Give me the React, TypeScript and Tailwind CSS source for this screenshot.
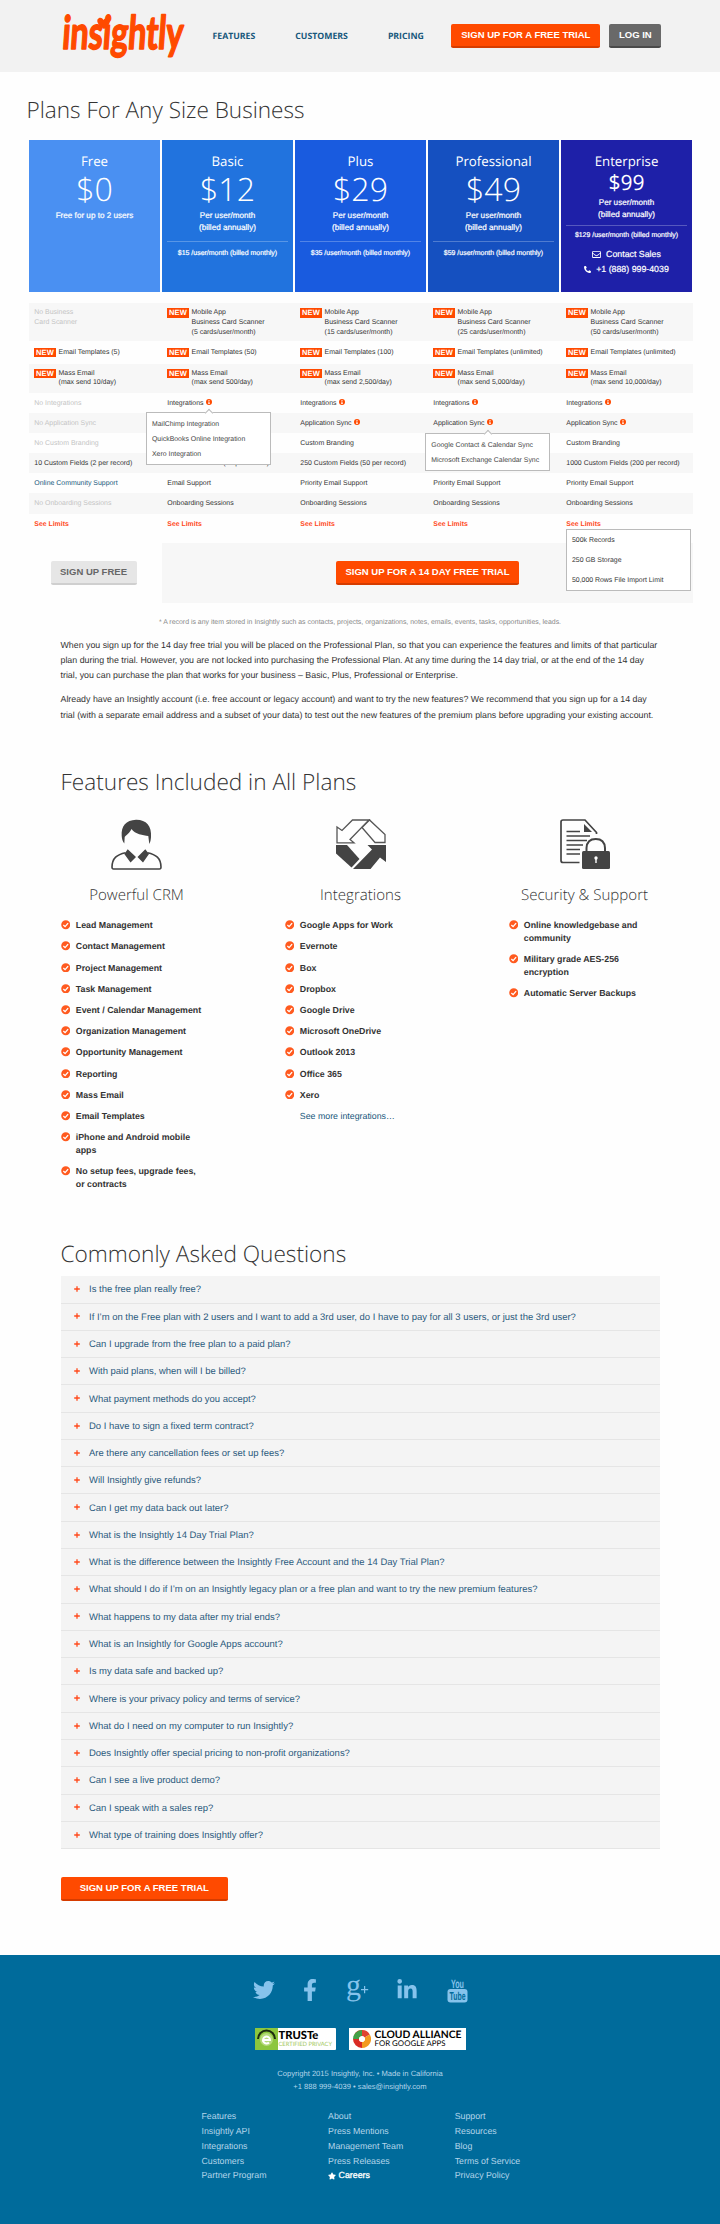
import type { ReactNode } from "react";
import { FaFacebookF, FaLinkedinIn, FaPhoneAlt, FaRegEnvelope, FaStar, FaTwitter } from "react-icons/fa";

type Plan = {
  name: string;
  price: string;
  monthly?: string;
  bg: string;
};

const plans: Plan[] = [
  { name: "Free", price: "$0", bg: "bg-[#4a90f2]" },
  { name: "Basic", price: "$12", monthly: "$15", bg: "bg-[#2173de]" },
  { name: "Plus", price: "$29", monthly: "$35", bg: "bg-[#195bdf]" },
  { name: "Professional", price: "$49", monthly: "$59", bg: "bg-[#1550c0]" },
  { name: "Enterprise", price: "$99", monthly: "$129", bg: "bg-[#1e20a8]" },
];

type Cell = { text: string[]; isNew?: boolean; muted?: boolean; link?: boolean; info?: boolean };

const off = (...text: string[]): Cell => ({ text, muted: true });
const fresh = (...text: string[]): Cell => ({ text, isNew: true });
const on = (...text: string[]): Cell => ({ text });
const info = (...text: string[]): Cell => ({ text, info: true });
const blank: Cell = { text: [] };

const rows: { height: string; cells: Cell[] }[] = [
  {
    height: "h-[38px] pt-[5px]",
    cells: [
      off("No Business", "Card Scanner"),
      fresh("Mobile App", "Business Card Scanner", "(5 cards/user/month)"),
      fresh("Mobile App", "Business Card Scanner", "(15 cards/user/month)"),
      fresh("Mobile App", "Business Card Scanner", "(25 cards/user/month)"),
      fresh("Mobile App", "Business Card Scanner", "(50 cards/user/month)"),
    ],
  },
  {
    height: "h-[22.5px] pt-[6.5px]",
    cells: [
      fresh("Email Templates (5)"),
      fresh("Email Templates (50)"),
      fresh("Email Templates (100)"),
      fresh("Email Templates (unlimited)"),
      fresh("Email Templates (unlimited)"),
    ],
  },
  {
    height: "h-[29px] pt-[5px]",
    cells: [
      fresh("Mass Email", "(max send 10/day)"),
      fresh("Mass Email", "(max send 500/day)"),
      fresh("Mass Email", "(max send 2,500/day)"),
      fresh("Mass Email", "(max send 5,000/day)"),
      fresh("Mass Email", "(max send 10,000/day)"),
    ],
  },
  {
    height: "h-[20.2px] pt-[6px]",
    cells: [off("No Integrations"), info("Integrations"), info("Integrations"), info("Integrations"), info("Integrations")],
  },
  {
    height: "h-[20.2px] pt-[6px]",
    cells: [off("No Application Sync"), blank, info("Application Sync"), info("Application Sync"), info("Application Sync")],
  },
  {
    height: "h-[20.2px] pt-[6px]",
    cells: [off("No Custom Branding"), blank, on("Custom Branding"), blank, on("Custom Branding")],
  },
  {
    height: "h-[20.2px] pt-[6px]",
    cells: [
      on("10 Custom Fields (2 per record)"),
      on("50 Custom Fields (10 per record)"),
      on("250 Custom Fields (50 per record)"),
      blank,
      on("1000 Custom Fields (200 per record)"),
    ],
  },
  {
    height: "h-[20.2px] pt-[6px]",
    cells: [
      { text: ["Online Community Support"], link: true },
      on("Email Support"),
      on("Priority Email Support"),
      on("Priority Email Support"),
      on("Priority Email Support"),
    ],
  },
  {
    height: "h-[20.2px] pt-[6px]",
    cells: [
      off("No Onboarding Sessions"),
      on("Onboarding Sessions"),
      on("Onboarding Sessions"),
      on("Onboarding Sessions"),
      on("Onboarding Sessions"),
    ],
  },
];

const crm = [
  ["Lead Management"],
  ["Contact Management"],
  ["Project Management"],
  ["Task Management"],
  ["Event / Calendar Management"],
  ["Organization Management"],
  ["Opportunity Management"],
  ["Reporting"],
  ["Mass Email"],
  ["Email Templates"],
  ["iPhone and Android mobile", "apps"],
  ["No setup fees, upgrade fees,", "or contracts"],
];

const integrations = [
  ["Google Apps for Work"],
  ["Evernote"],
  ["Box"],
  ["Dropbox"],
  ["Google Drive"],
  ["Microsoft OneDrive"],
  ["Outlook 2013"],
  ["Office 365"],
  ["Xero"],
];

const security = [["Online knowledgebase and", "community"], ["Military grade AES-256", "encryption"], ["Automatic Server Backups"]];

const questions = [
  "Is the free plan really free?",
  "If I’m on the Free plan with 2 users and I want to add a 3rd user, do I have to pay for all 3 users, or just the 3rd user?",
  "Can I upgrade from the free plan to a paid plan?",
  "With paid plans, when will I be billed?",
  "What payment methods do you accept?",
  "Do I have to sign a fixed term contract?",
  "Are there any cancellation fees or set up fees?",
  "Will Insightly give refunds?",
  "Can I get my data back out later?",
  "What is the Insightly 14 Day Trial Plan?",
  "What is the difference between the Insightly Free Account and the 14 Day Trial Plan?",
  "What should I do if I’m on an Insightly legacy plan or a free plan and want to try the new premium features?",
  "What happens to my data after my trial ends?",
  "What is an Insightly for Google Apps account?",
  "Is my data safe and backed up?",
  "Where is your privacy policy and terms of service?",
  "What do I need on my computer to run Insightly?",
  "Does Insightly offer special pricing to non-profit organizations?",
  "Can I see a live product demo?",
  "Can I speak with a sales rep?",
  "What type of training does Insightly offer?",
];

const footerLinks = [
  ["Features", "Insightly API", "Integrations", "Customers", "Partner Program"],
  ["About", "Press Mentions", "Management Team", "Press Releases", "Careers"],
  ["Support", "Resources", "Blog", "Terms of Service", "Privacy Policy"],
];

function Logo() {
  return (
    <svg width="128" height="56" viewBox="0 0 128 56" fill="#ff4a00" className="shrink-0 overflow-visible">
      <g transform="translate(3 3.500) skewX(-4) scale(1 1.1)">
        <text
          x="1"
          y="34"
          textLength="121"
          lengthAdjust="spacingAndGlyphs"
          stroke="#ff4a00"
          strokeWidth="1.500"
          strokeLinejoin="round"
          className="font-['Lato',sans-serif] text-[42px] font-bold"
        >
          insightly
        </text>
      </g>
      <path d="M44 21 c-5.500 -3.600 -7.600 -7 -6.400 -9.700 c1.400 -2.500 4.800 -2 5.700 .7 c1.600 -2.500 5.200 -2.500 6.200 .2 c1 2.900 -1.400 6.200 -5.500 8.800z" />
    </svg>
  );
}

function Button({ children, className }: { children: ReactNode; className: string }) {
  return (
    <button
      className={`flex h-[23.5px] items-center justify-center rounded-[2px] border-b-2 text-[9.52px] leading-none font-bold whitespace-nowrap ${className}`}
    >
      {children}
    </button>
  );
}

const orange = "border-[#d63c00] bg-[#ff4a00] text-white";

function Header() {
  return (
    <header className="flex h-[71.5px] items-start bg-[#f2f2f2] pl-[60px]">
      <div className="mt-2 h-14 w-[128px]">
        <Logo />
      </div>
      <nav className="mt-[28.5px] ml-[24.5px] flex h-4 items-center gap-[40px] font-['Open_Sans',sans-serif] text-[8.73px] font-bold text-[#17587c]">
        <a>FEATURES</a>
        <a>CUSTOMERS</a>
        <a>PRICING</a>
      </nav>
      <div className="mt-6 ml-[27.500px] flex gap-[9px]">
        <Button className={`w-[149px] ${orange}`}>SIGN UP FOR A FREE TRIAL</Button>
        <Button className="w-[52px] border-[#4a4a4a] bg-[#696969] text-white">LOG IN</Button>
      </div>
    </header>
  );
}

function PlanCard({ plan }: { plan: Plan }) {
  const enterprise = plan.name === "Enterprise";
  return (
    <div className={`flex h-[152px] w-[131px] flex-col items-center text-white ${plan.bg}`}>
      <h3 className="mt-3 h-[18px] font-['Open_Sans',sans-serif] text-[13.25px] leading-[18px]">{plan.name}</h3>
      {enterprise ? (
        <p className="h-[26px] font-['Open_Sans',sans-serif] text-[21px] leading-[27px]">{plan.price}</p>
      ) : (
        <p className="h-[38px] font-['Open_Sans',sans-serif] text-[32.1px] leading-[39px] font-light">{plan.price}</p>
      )}
      <div
        className={`text-center text-[8.15px] [-webkit-text-stroke:0.2px_white] ${enterprise ? "mt-[1px] leading-[11.8px]" : "mt-[2px] leading-[12.3px]"}`}
      >
        {plan.monthly ? (
          <>
            Per user/month
            <br />
            (billed annually)
          </>
        ) : (
          "Free for up to 2 users"
        )}
      </div>
      {plan.monthly && (
        <div
          className={`w-[121px] border-t border-white/25 text-center text-[6.96px] whitespace-nowrap [-webkit-text-stroke:0.2px_white] ${enterprise ? "mt-[4.500px] pt-[4px] leading-[12px]" : "mt-[6px] pt-[6.500px] leading-[12px]"}`}
        >
          {plan.monthly} /user/month (billed monthly)
        </div>
      )}
      {enterprise && (
        <div className="mt-[5px] flex flex-col items-center text-[8.8px] leading-[15px] [-webkit-text-stroke:0.2px_white]">
          <span className="flex items-center gap-[5px]">
            <FaRegEnvelope className="size-[9px]" />
            Contact Sales
          </span>
          <span className="flex items-center gap-[5px]">
            <FaPhoneAlt className="size-[7px]" />
            +1 (888) 999-4039
          </span>
        </div>
      )}
    </div>
  );
}

function InfoDot() {
  return (
    <svg width="6" height="6" viewBox="0 0 12 12" className="ml-[2px] inline-block align-[-0.5px]">
      <circle cx="6" cy="6" r="6" fill="#ff4a00" />
      <path d="M5 2h2v2H5zM4.500 5H7v3.500h.7V10H4.300V8.500H5V6.300h-.5z" fill="#fff" />
    </svg>
  );
}

function TableCell({ cell }: { cell: Cell }) {
  const colour = cell.muted ? "text-[#c4c4c4]" : cell.link ? "text-[#17587c]" : "text-[#333]";
  return (
    <div className={`flex w-[133px] shrink-0 pl-[5.300px] text-[6.95px] leading-[9.8px] whitespace-nowrap ${colour}`}>
      {cell.isNew && (
        <span className="mr-[3px] flex h-[9.5px] w-[21.3px] items-center justify-center bg-[#ff4a00] text-[7.5px] leading-none font-bold tracking-[0.2px] text-white">
          NEW
        </span>
      )}
      <span>
        {cell.text.map((line) => (
          <span key={line} className="block">
            {line}
            {cell.info && <InfoDot />}
          </span>
        ))}
      </span>
    </div>
  );
}

function Tooltip({ lines, place, caret }: { lines: string[]; place: string; caret: string }) {
  return (
    <div className={`absolute z-10 w-[124.5px] border border-[#bbb] bg-white pl-[5px] text-[6.92px] leading-[15px] text-[#444] ${place}`}>
      <span className={`absolute -top-[3.500px] size-[6px] rotate-45 border-t border-l border-[#bbb] bg-white ${caret}`} />
      {lines.map((l) => (
        <p key={l}>{l}</p>
      ))}
    </div>
  );
}

function PricingTable() {
  return (
    <section className="relative pl-[29px]">
      <div className="flex gap-[2px]">
        {plans.map((p) => (
          <PlanCard key={p.name} plan={p} />
        ))}
      </div>
      <div className="mt-[11px] w-[664px]">
        {rows.map((row, i) => (
          <div key={i} className={`flex items-start ${row.height} ${i % 2 === 0 ? "bg-[#f7f7f7]" : ""}`}>
            {row.cells.map((cell, j) => (
              <TableCell key={j} cell={cell} />
            ))}
          </div>
        ))}
        <div className="flex h-[29.3px] pt-[1px] text-[6.9px] leading-[20px] font-bold text-[#ff4a1c]">
          {plans.map((p) => (
            <span key={p.name} className="w-[133px] shrink-0 pl-[5.300px]">
              See Limits
            </span>
          ))}
        </div>
        <div className="flex h-[60px] items-center">
          <div className="w-[133px] pl-[21.500px]">
            <Button className="w-[86px] border-[#cfcfcf] bg-[#e6e6e6] text-[#666]">SIGN UP FREE</Button>
          </div>
          <div className="flex h-full flex-1 items-center justify-center bg-[#f7f7f7]">
            <Button className={`w-[183px] ${orange}`}>SIGN UP FOR A 14 DAY FREE TRIAL</Button>
          </div>
        </div>
      </div>
      <Tooltip
        lines={["MailChimp Integration", "QuickBooks Online Integration", "Xero Integration"]}
        place="top-[272px] left-[146px] h-[52.500px] pt-[3.500px]"
        caret="left-[59px]"
      />
      <Tooltip
        lines={["Google Contact & Calendar Sync", "Microsoft Exchange Calendar Sync"]}
        place="top-[293px] left-[425.300px] h-[37.500px] pt-[3.500px]"
        caret="left-[59px]"
      />
      <div className="absolute top-[389px] left-[566px] z-10 h-[62px] w-[125px] border border-[#bbb] bg-white pt-[0.600px] pl-[5px] text-[6.92px] leading-[20.1px] text-[#333]">
        <p>500k Records</p>
        <p>250 GB Storage</p>
        <p>50,000 Rows File Import Limit</p>
      </div>
    </section>
  );
}

function PersonIcon() {
  return (
    <svg width="51" height="51" viewBox="0 0 51 51" className="text-[#444]">
      <path
        d="M10.700 17 C10 7 15 1 25 .7 C35 .5 41 7 40 18 C39.800 21 39.300 23 38.300 25 L37.300 17 C32 16 24 15.500 20.500 10 C19 13.500 15 16.500 13.700 18 L13.300 24.500 C11.500 22 10.900 20 10.700 17 Z"
        fill="currentColor"
      />
      <path
        d="M14.500 33.700 C6 35.500 1.200 39 1 48 C1 49.500 1.500 50 2.500 50 H48.500 C49.500 50 50 49.500 50 48 C49.800 39 45 35.500 36.500 33.700"
        fill="none"
        stroke="currentColor"
        strokeWidth="1.6"
      />
      <path d="M16.700 30.300 L25 38 L19.500 43.500 L13.300 35 Z M34.300 30.300 L26.500 38 L32 43.500 L38 35 Z" fill="currentColor" />
    </svg>
  );
}

function ArrowsIcon() {
  return (
    <svg width="50" height="50" viewBox="0 0 50 50">
      <g fill="#fff" stroke="#555" strokeWidth="1.300">
        <path d="M1 8 L6 11.500 L16.500 1 H33 L14 20.500 L18 23.800 H1 Z" />
        <path d="M26 8.500 L33.500 1 L49 15.500 V23.500 H39 Z" />
      </g>
      <g fill="#444">
        <path d="M0 26 H11 L23.500 40 L15.500 48.500 L0 34.500 Z" />
        <path d="M17 50 L36 30.500 L31.500 26 H50 V43 L44 38.500 L34.500 50 Z" />
      </g>
    </svg>
  );
}

function DocLockIcon() {
  return (
    <svg width="50" height="50" viewBox="0 0 50 50">
      <path
        d="M19.500 43.500 H3 Q1 43.500 1 41.500 V3 Q1 1 3 1 H25 L36.500 13.500 V15"
        fill="none"
        stroke="#444"
        strokeWidth="1.700"
      />
      <path d="M24 5 V13 H32 Z" fill="#444" />
      <path d="M6.500 12.500 H20 M6.500 17 H30 M6.500 21.500 H27 M6.500 26 H23 M6.500 30.500 H20 M6.500 35 H20" stroke="#444" strokeWidth="1.500" />
      <path d="M26.500 33 V29 Q27 20 35.800 20 Q44.500 20 45 29 V33" fill="none" stroke="#444" strokeWidth="2" />
      <rect x="22" y="32" width="28" height="18" rx="1.500" fill="#444" />
      <circle cx="36" cy="39" r="1.700" fill="#fff" />
      <path d="M35.300 39 H36.700 V44 H35.300 Z" fill="#fff" />
    </svg>
  );
}

function CheckItem({ lines }: { lines: string[] }) {
  return (
    <li className="mb-[8.500px] flex">
      <svg width="9.500" height="9.500" viewBox="0 0 20 20" className="mt-[1px] mr-[5.800px] shrink-0">
        <circle cx="10" cy="10" r="9.500" fill="#ff5a1f" />
        <path d="M5 10.500 L8.600 14 L15 6.500" fill="none" stroke="#fff" strokeWidth="2.800" />
      </svg>
      <span>
        {lines.map((l) => (
          <span key={l} className="block">
            {l}
          </span>
        ))}
      </span>
    </li>
  );
}

function FeatureColumn({ icon, title, items, children }: { icon: ReactNode; title: string; items: string[][]; children?: ReactNode }) {
  return (
    <div className="w-[224px] shrink-0">
      <div className="flex w-[152px] flex-col items-center">
        <div className="h-[51px]">{icon}</div>
        <h3 className="mt-[15.500px] h-5 font-['Open_Sans',sans-serif] text-[15.070px] leading-5 font-light whitespace-nowrap">{title}</h3>
      </div>
      <ul className="mt-[14px] text-[8.820px] leading-[12.700px] font-bold whitespace-nowrap text-[#333]">
        {items.map((lines) => (
          <CheckItem key={lines[0]} lines={lines} />
        ))}
        {children}
      </ul>
    </div>
  );
}

function Features() {
  return (
    <section className="h-[472px] pl-[60.500px]">
      <h2 className="h-8 font-['Open_Sans',sans-serif] text-[22.600px] leading-8 font-light">Features Included in All Plans</h2>
      <div className="mt-[21px] flex">
        <FeatureColumn icon={<PersonIcon />} title="Powerful CRM" items={crm} />
        <FeatureColumn icon={<ArrowsIcon />} title="Integrations" items={integrations}>
          <li className="pl-[15.300px] font-normal text-[#17587c]">See more integrations…</li>
        </FeatureColumn>
        <FeatureColumn icon={<DocLockIcon />} title="Security & Support" items={security} />
      </div>
    </section>
  );
}

function Faq() {
  return (
    <section className="px-[60.500px]">
      <h2 className="h-8 font-['Open_Sans',sans-serif] text-[22.650px] leading-8 font-light">Commonly Asked Questions</h2>
      <ul className="mt-[6.500px] bg-[#f4f4f4]">
        {questions.map((q) => (
          <li
            key={q}
            className="flex h-[27.290px] items-center border-b border-[#e5e5e5] pt-[1.500px] pl-[13.500px] text-[9.470px] leading-none whitespace-nowrap text-[#2b5a7d]"
          >
            <svg width="6" height="6" viewBox="0 0 6 6" className="-mt-[2px] mr-[9px]">
              <path d="M3 0.200V5.800M0.200 3H5.800" stroke="#ff4a1c" strokeWidth="1.300" />
            </svg>
            {q}
          </li>
        ))}
      </ul>
      <Button className={`mt-[28px] w-[167.500px] ${orange}`}>SIGN UP FOR A FREE TRIAL</Button>
    </section>
  );
}

function Footer() {
  return (
    <footer className="mt-[54.500px] flex h-[272px] flex-col items-center bg-[#006b9b] text-[#b3d5ea]">
      <div className="mt-[21px] flex h-[28px] w-[215px] items-center justify-between text-[#86c3ec]">
        <FaTwitter className="size-[22px]" />
        <FaFacebookF className="h-[22px] w-[14px]" />
        <svg width="22" height="25" viewBox="0 0 22 25" fill="currentColor" className="overflow-visible">
          <text x="0" y="17" className="font-['Liberation_Serif',serif] text-[30px]">
            g
          </text>
          <path d="M18 8h1.200v3h3v1.200h-3v3H18v-3h-3v-1.200h3z" />
        </svg>
        <FaLinkedinIn className="size-[22px]" />
        <svg width="21" height="25" viewBox="0 0 21 25" className="overflow-visible">
          <text x="4" y="9.500" textLength="13" lengthAdjust="spacingAndGlyphs" fill="currentColor" className="text-[12px] font-bold">
            You
          </text>
          <rect x="0.500" y="11" width="20" height="13.500" rx="3" fill="currentColor" />
          <text x="2.500" y="21.800" textLength="16" lengthAdjust="spacingAndGlyphs" fill="#006b9b" className="text-[11.500px] font-bold">
            Tube
          </text>
        </svg>
      </div>
      <div className="mt-6 flex h-[22px] w-[211px] justify-between font-['Lato',sans-serif] text-black">
        <div className="flex w-[81px] rounded-[1px] bg-white">
          <svg width="23" height="22" viewBox="0 0 23 22" className="shrink-0">
            <rect width="23" height="22" fill="#8cc63e" />
            <circle cx="11.500" cy="11.500" r="6.500" fill="#b5da7c" />
            <path d="M3 11 A8.500 8.500 0 0 1 20 11" fill="none" stroke="#1c2b10" strokeWidth="2" />
            <path d="M8 12 H15 A3.500 3.500 0 1 0 14 14.500" fill="none" stroke="#fff" strokeWidth="2" />
          </svg>
          <div className="pl-[1px] whitespace-nowrap">
            <p className="mt-[2px] text-[11.200px] leading-[12px] font-black">TRUSTe</p>
            <p className="text-[5.800px] leading-[6px] text-[#a5c95e]">CERTIFIED PRIVACY</p>
          </div>
        </div>
        <div className="flex w-[117px] items-center bg-white pl-[4px]">
          <svg width="18" height="18" viewBox="0 0 18 18" className="mr-[4px] shrink-0" fill="none" strokeWidth="6">
            <path d="M3.800 6 A6 6 0 0 1 14.200 6" stroke="#e0442f" />
            <path d="M14.200 6 A6 6 0 0 1 9 15" stroke="#f39a1f" />
            <path d="M9 15 A6 6 0 0 1 3 9" stroke="#d92c25" />
            <path d="M3 9 A6 6 0 0 1 9 3" stroke="#43a047" />
            <circle cx="9" cy="9" r="2.800" fill="#fff" />
          </svg>
          <div className="whitespace-nowrap">
            <p className="text-[10.350px] leading-[9px] font-bold">CLOUD ALLIANCE</p>
            <p className="text-[7.860px] leading-[7.500px]">FOR GOOGLE APPS</p>
          </div>
        </div>
      </div>
      <div className="mt-[17px] text-center text-[7.600px] leading-[13.300px]">
        <p>Copyright 2015 Insightly, Inc. • Made in California</p>
        <p>+1 888 999-4039 • sales@insightly.com</p>
      </div>
      <div className="mt-[15.500px] flex w-[317px] text-[8.800px] leading-[14.800px] whitespace-nowrap">
        {footerLinks.map((column) => (
          <ul key={column[0]} className="w-[126.600px] shrink-0">
            {column.map((link) =>
              link === "Careers" ? (
                <li key={link} className="flex items-center gap-[2.500px] text-white [-webkit-text-stroke:0.3px_white]">
                  <FaStar className="size-[8px]" />
                  {link}
                </li>
              ) : (
                <li key={link}>{link}</li>
              ),
            )}
          </ul>
        ))}
      </div>
    </footer>
  );
}

export default function App() {
  return (
    <div className="h-[2224px] w-[720px] overflow-hidden bg-[#fefefe] font-['Liberation_Sans',Arial,sans-serif] text-[#333] [text-rendering:geometricPrecision]">
      <Header />
      <h1 className="mt-[22px] mb-[14.500px] h-8 pl-[26.500px] font-['Open_Sans',sans-serif] text-[22.550px] leading-8 font-light">
        Plans For Any Size Business
      </h1>
      <PricingTable />
      <p className="mt-[14.500px] h-[12px] text-center text-[6.930px] leading-[12px] text-[#888]">
        * A record is any item stored in Insightly such as contacts, projects, organizations, notes, emails, events, tasks, opportunities, leads.
      </p>
      <div className="mt-[8.300px] h-[128px] pl-[60.500px] text-[8.830px] leading-[15.300px] whitespace-nowrap">
        <p>
          When you sign up for the 14 day free trial you will be placed on the Professional Plan, so that you can experience the features and limits of that particular
          <br />
          plan during the trial. However, you are not locked into purchasing the Professional Plan. At any time during the 14 day trial, or at the end of the 14 day
          <br />
          trial, you can purchase the plan that works for your business – Basic, Plus, Professional or Enterprise.
        </p>
        <p className="mt-[8.800px]">
          Already have an Insightly account (i.e. free account or legacy account) and want to try the new features? We recommend that you sign up for a 14 day
          <br />
          trial (with a separate email address and a subset of your data) to test out the new features of the premium plans before upgrading your existing account.
        </p>
      </div>
      <Features />
      <Faq />
      <Footer />
    </div>
  );
}
